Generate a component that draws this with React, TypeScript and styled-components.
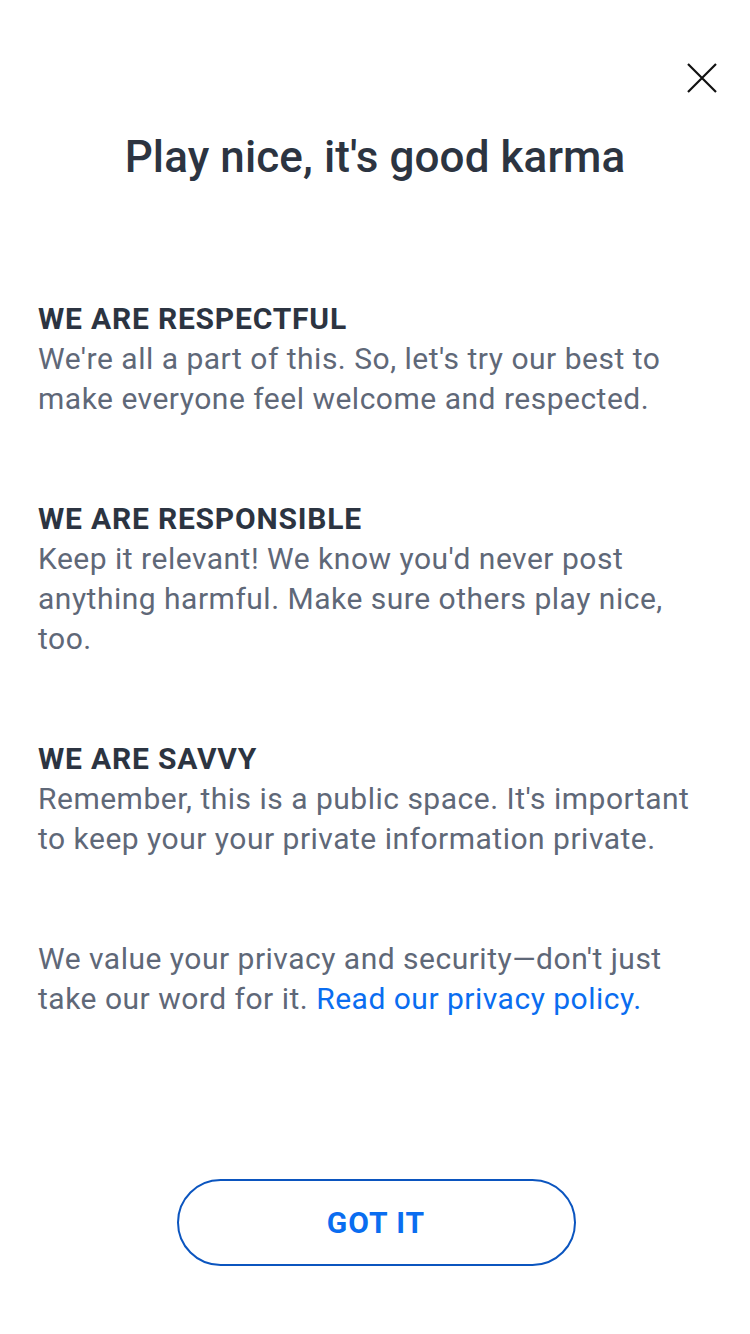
import React from "react";
import styled, { createGlobalStyle } from "styled-components";

const Global = createGlobalStyle`
  html, body { margin: 0; padding: 0; background: #ffffff; }
  body { font-family: Roboto, "Noto Sans", Arial, sans-serif; -webkit-font-smoothing: antialiased; }
  * { box-sizing: border-box; }
`;

const Page = styled.div`
  width: 750px;
  min-height: 1334px;
  background: #fff;
  display: flex;
  flex-direction: column;
`;

const TopBar = styled.div`
  display: flex;
  justify-content: flex-end;
  padding: 63px 33px 0 0;
`;

const CloseButton = styled.button`
  width: 30px;
  height: 30px;
  padding: 0;
  border: none;
  background: transparent;
  display: flex;
  cursor: pointer;
`;

const Title = styled.h1`
  margin: 36px 0 0;
  font-size: 44px;
  line-height: 56px;
  font-weight: 500;
  letter-spacing: 0.1px;
  color: #2c3441;
  text-align: center;
`;

const Content = styled.div`
  display: flex;
  flex-direction: column;
  gap: 80px;
  padding: 0 38px;
  margin-top: 114px;
`;

const Section = styled.section`
  display: flex;
  flex-direction: column;
`;

const Heading = styled.h2`
  margin: 0;
  font-size: 30px;
  line-height: 40px;
  font-weight: 700;
  letter-spacing: 0.8px;
  color: #2c3441;
`;

const Body = styled.p`
  margin: 0;
  font-size: 30px;
  line-height: 40px;
  font-weight: 400;
  letter-spacing: 0.5px;
  color: #5f6878;
`;

const Link = styled.a`
  color: #0a6df0;
  text-decoration: none;
`;

const ButtonRow = styled.div`
  display: flex;
  justify-content: center;
  margin-top: 160px;
  padding-left: 2px;
`;

const GotIt = styled.button`
  width: 399px;
  height: 87px;
  border: 2px solid #0b55bf;
  border-radius: 44px;
  background: #fff;
  color: #0a6df0;
  font-family: Roboto, "Noto Sans", Arial, sans-serif;
  font-size: 30px;
  font-weight: 700;
  letter-spacing: 1px;
  cursor: pointer;
`;

const sections = [
  {
    title: "WE ARE RESPECTFUL",
    text: "We're all a part of this. So, let's try our best to make everyone feel welcome and respected.",
  },
  {
    title: "WE ARE RESPONSIBLE",
    text: "Keep it relevant! We know you'd never post anything harmful. Make sure others play nice, too.",
  },
  {
    title: "WE ARE SAVVY",
    text: "Remember, this is a public space. It's important to keep your your private information private.",
  },
];

export default function App() {
  return (
    <Page>
      <Global />
      <TopBar>
        <CloseButton aria-label="Close">
          <svg width="30" height="30" viewBox="0 0 30 30">
            <path d="M1 1 L29 29 M29 1 L1 29" stroke="#111" strokeWidth="2.2" fill="none" />
          </svg>
        </CloseButton>
      </TopBar>
      <Title>Play nice, it's good karma</Title>
      <Content>
        {sections.map((s) => (
          <Section key={s.title}>
            <Heading>{s.title}</Heading>
            <Body>{s.text}</Body>
          </Section>
        ))}
        <Section>
          <Body>
            We value your privacy and security—don't just take our word for it.{" "}
            <Link href="#">Read our privacy policy.</Link>
          </Body>
        </Section>
      </Content>
      <ButtonRow>
        <GotIt>GOT IT</GotIt>
      </ButtonRow>
    </Page>
  );
}
